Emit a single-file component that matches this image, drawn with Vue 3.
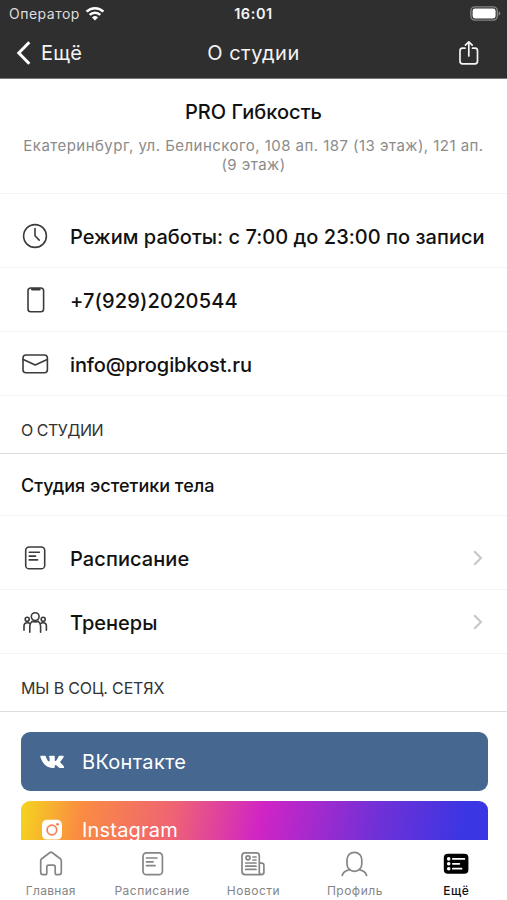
<script setup>
const contacts = [
  { icon: 'clock', text: 'Режим работы: с 7:00 до 23:00 по записи' },
  { icon: 'phone', text: '+7(929)2020544' },
  { icon: 'mail', text: 'info@progibkost.ru' },
]
const links = [
  { icon: 'schedule', text: 'Расписание' },
  { icon: 'team', text: 'Тренеры' },
]
const tabs = [
  { icon: 'home', text: 'Главная' },
  { icon: 'schedule', text: 'Расписание' },
  { icon: 'news', text: 'Новости' },
  { icon: 'profile', text: 'Профиль' },
  { icon: 'more', text: 'Ещё', active: true },
]
</script>

<template>
  <div class="screen">
    <header class="header">
      <div class="status">
        <div class="carrier">
          <span>Оператор</span>
          <svg width="20" height="15" viewBox="0 0 20 15" fill="none" stroke="#fff" stroke-width="2.5">
            <path d="M1.6 5.6a12 12 0 0 1 16.8 0" />
            <path d="M4.7 8.9a7.6 7.6 0 0 1 10.6 0" />
            <path d="M7 11.4a4.3 4.3 0 0 1 6 0L10 14.5z" fill="#fff" stroke="none" />
          </svg>
        </div>
        <div class="time">16:01</div>
        <svg class="battery" width="31" height="15" viewBox="0 0 31 15">
          <rect x=".9" y=".9" width="26.4" height="13.2" rx="4" fill="none" stroke="#858585" stroke-width="1.4" />
          <rect x="2.6" y="2.6" width="23" height="9.8" rx="2.3" fill="#fff" />
          <path d="M28.6 5.2q1.8.8 1.8 2.3t-1.8 2.3z" fill="#858585" />
        </svg>
      </div>
      <div class="nav">
        <div class="back">
          <svg width="16" height="26" viewBox="0 0 16 26" fill="none" stroke="#fff" stroke-width="3">
            <path d="M13.3 2.2 2.8 13l10.5 10.8" />
          </svg>
          <span>Ещё</span>
        </div>
        <div class="title">О студии</div>
        <svg class="share" width="22" height="26" viewBox="0 0 22 26" fill="none" stroke="#f4f4f4" stroke-width="1.7" stroke-linecap="round" stroke-linejoin="round">
          <path d="M7 8.2H4.6Q2 8.2 2 10.8v10.4q0 2.6 2.6 2.6h12.3q2.6 0 2.6-2.6V10.8q0-2.6-2.6-2.6h-2.4M10.8 16V2M7.4 5.2 10.8 1.8l3.4 3.4" />
        </svg>
      </div>
    </header>

    <main class="content">
      <section class="intro">
        <h1><span>PRO Гибкость</span></h1>
        <p>Екатеринбург, ул. Белинского, 108 ап. 187 (13 этаж), 121 ап.<br />(9 этаж)</p>
      </section>

      <section class="rows contacts">
        <div v-for="c in contacts" :key="c.icon" class="row">
          <svg class="row-icon" width="28" height="28" viewBox="0 0 28 28">
            <template v-if="c.icon === 'clock'">
              <circle cx="14" cy="14" r="11.4" />
              <path d="M14 6.5v7.2l4.2 4.4" />
            </template>
            <template v-else-if="c.icon === 'phone'">
              <rect x="7" y="2" width="15.6" height="23.8" rx="2.8" />
              <path d="M11.2 3.3h7.2" stroke-width="2.4" />
            </template>
            <template v-else>
              <rect x="2" y="5" width="24.4" height="17.8" rx="3" />
              <path d="M2.3 9.5 14.2 15l12-5.5" />
            </template>
          </svg>
          <span :class="['row-text', c.icon]">{{ c.text }}</span>
        </div>
      </section>

      <h2 class="section-title about">О СТУДИИ</h2>
      <p class="description"><span>Студия эстетики тела</span></p>

      <section class="rows links">
        <div v-for="l in links" :key="l.icon" class="row">
          <svg class="row-icon" width="28" height="28" viewBox="0 0 28 28">
            <template v-if="l.icon === 'schedule'">
              <rect x="4.7" y="3" width="19" height="21.8" rx="3.4" />
              <path d="M8.2 8.3h10.2M8.2 12.1h6.4M8.2 15.9h8.4" />
            </template>
            <template v-else>
              <circle cx="14.2" cy="8.600" r="3.900" />
              <circle cx="6.200" cy="11.200" r="2" />
              <circle cx="22.200" cy="11.200" r="2" />
              <path d="M8.800 24.200v-6q0-3.200 2.400-4.800M19.600 24.200v-6q0-3.200-2.400-4.800M11.200 13.400q3 .9 6 0M3 22.300v-4.200q0-3.400 3.200-3.400 2 0 3 1.200M25.400 22.300v-4.200q0-3.400-3.200-3.400-2 0-3 1.200" />
            </template>
          </svg>
          <span :class="['row-text', l.icon]">{{ l.text }}</span>
          <svg class="chevron" width="10" height="16" viewBox="0 0 10 16" fill="none" stroke="#c5c5c7" stroke-width="2">
            <path d="m1.2 1.2 6.8 6.8-6.8 6.8" />
          </svg>
        </div>
      </section>

      <h2 class="section-title social-title">МЫ В СОЦ. СЕТЯХ</h2>
      <section class="social">
        <div class="button vk">
          <svg width="24" height="24" viewBox="0 0 24 24" fill="#fff">
            <path d="M1 5.8h3.7q.8 0 1.1.8c1 2.8 2.2 4.8 3.1 4.8.5 0 .7-.4.7-1.5V8.2c0-1-.5-1.1-1-1.6.4-.6 1-.8 2-.8h3c.9 0 1.2.4 1.2 1.3v3.2c0 .6.2.8.5.8.8 0 2.3-2.3 3.1-4.4q.4-.9 1.3-.9h3.1c1 0 1 .6.8 1.2-.6 1.6-3.500 4.700-3.500 5 0 .6 3.400 3.200 4 4.700.3.8-.1 1.300-1 1.300h-3.400c-1.300 0-2.700-2.700-4.100-2.900-.6 0-.8.4-.8 1v1q0 .9-1 .9h-1.500C7.600 18 2.800 14.400.4 7.100.1 6.300.2 5.800 1 5.800z" />
          </svg>
          <span>ВКонтакте</span>
        </div>
        <div class="button instagram">
          <svg width="24" height="24" viewBox="0 0 24 24">
            <rect x="2" y="1.800" width="20" height="19.800" rx="5" fill="#fff" />
            <circle cx="11.900" cy="12" r="4.800" fill="none" stroke="#f58050" stroke-width="1.700" />
            <circle cx="17.500" cy="6.300" r="1.400" fill="#f58050" />
          </svg>
          <span>Instagram</span>
        </div>
      </section>
    </main>

    <nav class="tabs">
      <div v-for="t in tabs" :key="t.icon" :class="['tab', t.icon, { active: t.active }]">
        <svg class="tab-icon" width="28" height="28" viewBox="0 0 28 28">
          <template v-if="t.icon === 'home'">
            <path d="M3.7 10.9q0-1.300 1-2.200L13 2.500q1-.7 2 0l8.300 6.200q1 .9 1 2.200v11.300q0 2.400-2.400 2.400h-2q-1.700 0-1.700-1.700v-6q0-1.700-1.700-1.700h-5q-1.700 0-1.700 1.700v6q0 1.700-1.700 1.700h-2q-2.400 0-2.400-2.400z" />
          </template>
          <template v-else-if="t.icon === 'schedule'">
            <rect x="5" y="2.8" width="19.4" height="21.8" rx="3.4" />
            <path d="M8.5 8h10.400M8.500 11.800h6.600M8.500 15.600h8.600" />
          </template>
          <template v-else-if="t.icon === 'news'">
            <path d="M22.300 24.600H6q-3 0-3-3V5.800q0-3 3-3h11.300q3 0 3 3v16.500q0 2.300 2.300 2.300t2.300-2.300v-7q0-2.200-2.200-2.200h-2.400" />
            <circle cx="9" cy="7.800" r="2" />
            <path d="M14 7h3M14 10h3M6.700 13h10.300M6.700 16.200h10.300M6.700 19.400h10.300" />
          </template>
          <template v-else-if="t.icon === 'profile'">
            <rect x="6" y="2.300" width="14.800" height="19" rx="7.400" />
            <path d="M1.200 25.500q1.200-4.300 6.700-5.600M25.600 25.500q-1.200-4.300-6.700-5.600" />
          </template>
          <template v-else>
            <rect x="1.800" y="3.800" width="24.600" height="20" rx="4" fill="#000" stroke="none" />
            <path d="M10.800 8.900h11.600M10.800 13.800h6.600M10.800 18.700h8.800" stroke="#fff" stroke-width="1.700" />
            <g fill="#fff" stroke="none">
              <circle cx="6.700" cy="8.900" r="1.800" /><circle cx="6.700" cy="13.800" r="1.800" /><circle cx="6.700" cy="18.700" r="1.800" />
            </g>
          </template>
        </svg>
        <span>{{ t.text }}</span>
      </div>
    </nav>
  </div>
</template>

<style>
body {
  margin: 0;
  background: #fff;
}
</style>

<style scoped>
.screen {
  width: 507px;
  height: 900px;
  display: flex;
  flex-direction: column;
  overflow: hidden;
  background: #fff;
  color: #111;
  font-family: Inter, "Noto Sans", sans-serif;
  white-space: nowrap;
}
svg {
  display: block;
  flex: none;
}
h1, h2, p {
  margin: 0;
  font-weight: inherit;
}
.header {
  box-sizing: border-box;
  height: 79px;
  flex: none;
  background: #2f2f2f;
  color: #f4f4f4;
  border-bottom: 1px solid #777;
}
.status {
  height: 27px;
  display: grid;
  grid-template-columns: 1fr auto 1fr;
  align-items: center;
  padding: 0 6px 0 9px;
}
.carrier {
  display: flex;
  align-items: center;
  gap: 5px;
  font-size: 14px;
  letter-spacing: .5px;
  color: #ddd;
}
.time {
  margin-left: -3px;
  font-size: 14.5px;
  font-weight: 600;
  letter-spacing: .6px;
}
.battery {
  justify-self: end;
}
.nav {
  height: 51px;
  display: grid;
  grid-template-columns: 1fr auto 1fr;
  align-items: center;
  padding: 0 16px;
  font-size: 20px;
}
.back {
  display: flex;
  align-items: center;
  gap: 9px;
  letter-spacing: .3px;
}
.title {
  letter-spacing: .5px;
}
.share {
  justify-self: end;
  margin-right: 11px;
}
.content {
  height: 761px;
  flex: none;
  overflow: hidden;
}
.intro {
  box-sizing: border-box;
  height: 115px;
  padding-top: 20px;
  border-bottom: 1px solid #f3f3f3;
  text-align: center;
}
.intro h1 {
  font-size: 20px;
  line-height: 26px;
  font-weight: 500;
  letter-spacing: .05px;
}
.intro p {
  margin-top: 11px;
  font-size: 15px;
  line-height: 19px;
  letter-spacing: .46px;
  color: #8b8b8b;
}
.contacts {
  padding-top: 10px;
}
.links {
  padding-top: 10px;
}
.row {
  box-sizing: border-box;
  height: 64px;
  display: flex;
  align-items: center;
  padding: 0 24px 0 21px;
  border-bottom: 1px solid #f3f3f3;
}
.row-icon {
  fill: none;
  stroke: #3b3b3b;
  stroke-width: 1.6;
  stroke-linecap: round;
  stroke-linejoin: round;
}
.row-text {
  margin-left: 21px;
  padding-top: 2px;
  font-size: 20px;
  font-weight: 500;
}
.row-text.clock {
  letter-spacing: .03px;
}
.row-text.phone {
  letter-spacing: .15px;
}
.row-text.mail {
  letter-spacing: -.1px;
}
.row-text.schedule {
  letter-spacing: .08px;
}
.chevron {
  margin-left: auto;
}
.section-title {
  box-sizing: border-box;
  height: 58px;
  display: flex;
  align-items: center;
  padding: 10px 21px 0;
  font-size: 16px;
  color: #333;
  border-bottom: 1px solid #dedede;
}
.about {
  letter-spacing: -.5px;
}
.social-title {
  letter-spacing: -.15px;
}
.description {
  box-sizing: border-box;
  height: 62px;
  display: flex;
  align-items: center;
  padding: 2px 21px 0;
  font-size: 18px;
  font-weight: 500;
  border-bottom: 1px solid #f3f3f3;
}
.social {
  display: flex;
  flex-direction: column;
  gap: 10px;
  padding: 20px 19px 0 21px;
}
.button {
  height: 59px;
  flex: none;
  display: flex;
  align-items: center;
  gap: 18px;
  padding-left: 19px;
  box-sizing: border-box;
  border-radius: 9px;
  color: #fff;
  font-size: 20px;
}
.vk {
  padding-top: 1px;
  background: #46678f;
  letter-spacing: .3px;
}
.instagram {
  padding-bottom: 2px;
  background: linear-gradient(100deg, #f5d020 1%, #fa8c42 13%, #ef6472 32%, #d024c5 51%, #7530d6 74%, #3a36e3 94%);
  letter-spacing: .2px;
}
.tabs {
  height: 60px;
  flex: none;
  display: grid;
  grid-template-columns: repeat(5, 1fr);
  background: #fff;
}
.tab {
  display: flex;
  flex-direction: column;
  align-items: center;
  padding-top: 10px;
  font-size: 12px;
  line-height: 16px;
  letter-spacing: .5px;
  color: #858585;
}
.tab.home {
  letter-spacing: .3px;
}
.tab span {
  margin-top: 5px;
}
.tab-icon {
  fill: none;
  stroke: #858585;
  stroke-width: 1.7;
  stroke-linecap: round;
  stroke-linejoin: round;
}
.tab.active {
  color: #111;
  font-weight: 500;
}
</style>
